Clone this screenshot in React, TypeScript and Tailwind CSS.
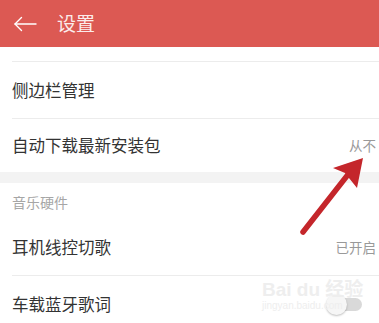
import React from "react";

const font = { fontFamily: '"Noto Sans CJK SC", "Noto Sans", sans-serif' };

function Divider() {
    return <div className="ml-3 h-px bg-[#ececec]" />;
}

function Row({ label, value, children }: { label: string; value?: string; children?: React.ReactNode }) {
    return (
        <div className="flex h-14 items-center justify-between pl-3 pr-[3px]">
            <span className="text-[16.5px] text-[#333333]">{label}</span>
            {value && <span className="text-[13.5px] text-[#999999]">{value}</span>}
            {children}
        </div>
    );
}

export default function App() {
    return (
        <div className="relative h-[323px] w-[379px] overflow-hidden bg-white" style={font}>
            {/* header */}
            <div className="flex h-[47px] items-center bg-[#dc5953] pl-[13px]">
                <svg width="24" height="16" viewBox="0 0 24 16" fill="none" stroke="white" strokeWidth="1.4" strokeLinecap="round" strokeLinejoin="round">
                    <path d="M23 8H2" />
                    <path d="M8.5 1.5L2 8l6.5 6.5" />
                </svg>
                <span className="ml-[20px] text-[19px] text-[#fbeceb]">设置</span>
            </div>

            <div className="h-[14px]" />
            <Divider />
            <Row label="侧边栏管理" />
            <Divider />
            <div className="flex h-[53px] items-center justify-between pl-3 pr-[3px]">
                <span className="text-[16.5px] text-[#333333]">自动下载最新安装包</span>
                <span className="text-[13.5px] text-[#999999]">从不</span>
            </div>
            <div className="h-[11px] bg-[#f3f3f3]" />

            <div className="flex h-9 items-center pl-3 pt-[2px]">
                <span className="text-[14px] text-[#a6a6a6]">音乐硬件</span>
            </div>
            <Row label="耳机线控切歌" value="已开启" />
            <Divider />
            <Row label="车载蓝牙歌词">
                <div className="relative mr-[14px] h-[13px] w-[30px] rounded-full bg-[#d9d9d9]">
                    <div className="absolute -left-[6px] -top-[4px] h-[21px] w-[21px] rounded-full bg-[#f6f6f6] shadow-[0_1px_2px_rgba(0,0,0,0.25)]" />
                </div>
            </Row>

            {/* watermark */}
            <div className="pointer-events-none absolute left-[262px] top-[280px] flex flex-col leading-none text-[#eeeeee]">
                <span className="text-[19px] font-bold" style={{ fontFamily: '"Liberation Sans", "Noto Sans CJK SC", sans-serif' }}>Bai du 经验</span>
                <span className="mt-[2px] text-[10px]" style={{ fontFamily: '"Liberation Sans", sans-serif' }}>jingyan.baidu.com</span>
            </div>

            {/* red arrow */}
            <svg className="pointer-events-none absolute left-0 top-0" width="379" height="323" viewBox="0 0 379 323">
                <path d="M303 232L350 172" stroke="#c4262b" strokeWidth="5.5" strokeLinecap="round" />
                <path d="M363 158L333 168L345 173L357 188Z" fill="#c4262b" />
            </svg>
        </div>
    );
}
